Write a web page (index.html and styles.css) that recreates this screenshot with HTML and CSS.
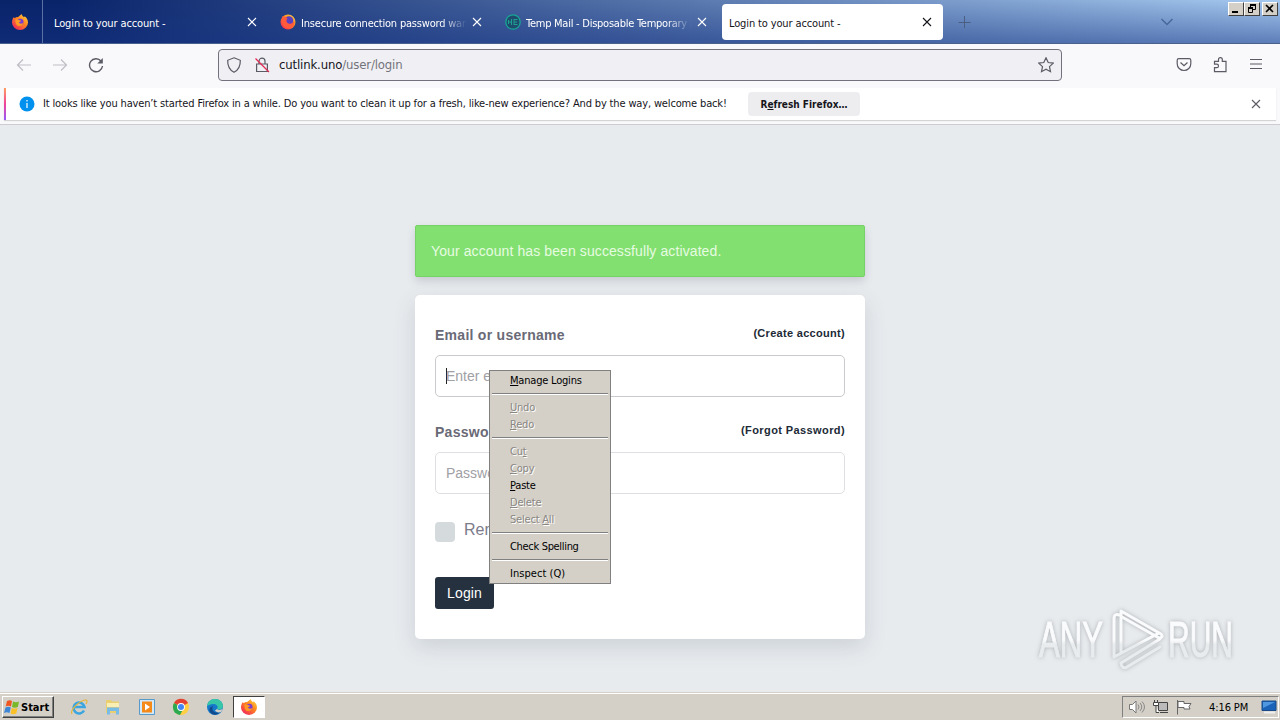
FILE: index.html
```html
<!DOCTYPE html>
<html lang="en">
<head>
  <meta charset="UTF-8" />
  <meta name="viewport" content="width=device-width, initial-scale=1.0" />
  <title>Login to your account -</title>
  <link rel="stylesheet" href="styles.css">
</head>
<body>
  <!-- shared icons -->
  <svg class="defs" width="0" height="0">
    <defs>
      <linearGradient id="fire" x1="1" y1="0" x2="0.2" y2="1">
        <stop offset="0" stop-color="#ffe14a" />
        <stop offset="0.45" stop-color="#ff8a1f" />
        <stop offset="1" stop-color="#f0245c" />
      </linearGradient>
      <linearGradient id="mark" x1="0" y1="0" x2="0" y2="74" gradientUnits="userSpaceOnUse">
        <stop offset="0.5" stop-color="#fafbfc" />
        <stop offset="0.56" stop-color="#e9ecee" />
      </linearGradient>
      <symbol id="firefox" viewBox="0 0 16 16">
        <path d="M1.600 3.200C2 3.600 2.400 3.800 3 4 4 3 5 3 5.800 3.200 7.200 2.400 8 1.200 9.600 0c.2 1.600 1.400 2.200 2.400 3.200.4-.2.6-.5.6-.9C14.800 4 16 6 16 8.600A8 7.400 0 0 1 0 8.600C0 6.400.7 4.600 1.600 3.200z" fill="url(#fire)" />
        <circle cx="8.300" cy="8" r="3.200" fill="#7a3bd0" />
        <path d="M3.500 5.500c1.500-.7 3-.3 3.600.8 1 .2 1.500.1 2 .4-.6 1.200-1.700 1.100-2.300 1.900.9 1.200 2.800 1.500 4.400.2-.5 2.300-2.300 3.500-4.200 3.300C4.500 12 3 9 3.500 5.500z" fill="#ff9a25" />
      </symbol>
      <symbol id="close" viewBox="0 0 16 16">
        <path d="M4 4l8 8M12 4l-8 8" stroke="currentColor" stroke-width="1.100" fill="none" />
      </symbol>
    </defs>
  </svg>

  <header class="tabbar">
    <div class="firefox-view"><svg width="16" height="16"><use href="#firefox" /></svg></div>
    <div class="tabs">
      <div class="tab">
        <span class="tab-title">Login to your account -</span>
        <svg class="tab-close" width="16" height="16"><use href="#close" /></svg>
      </div>
      <div class="tab has-icon">
        <svg class="tab-icon" viewBox="0 0 16 16">
          <circle cx="8" cy="8" r="7.500" fill="url(#fire)" />
          <circle cx="9" cy="6.500" r="4.300" fill="#5b3fc0" />
          <path d="M2.500 2C4 3 6 3 7.500 4.500 6 6 6 8.500 8.500 9.500c2.500.8 5-.5 6-2.500 0 5-3 7.500-6.500 7.500C3 14.500.5 8 2.500 2z" fill="#ff5a3c" />
        </svg>
        <span class="tab-title fade insecure">Insecure connection password warning</span>
        <svg class="tab-close" width="16" height="16"><use href="#close" /></svg>
      </div>
      <div class="tab has-icon">
        <svg class="tab-icon" viewBox="0 0 16 16">
          <circle cx="8" cy="8" r="7.200" fill="#1d4c6c" stroke="#17a796" stroke-width="1.300" />
          <path d="M3.500 6v4M3.500 8h3M6.500 5v6M9 5v6M9 5.500h3.500M9 8h3M9 10.500h3.500" stroke="#1fa093" fill="none" />
        </svg>
        <span class="tab-title fade temp">Temp Mail - Disposable Temporary Email</span>
        <svg class="tab-close" width="16" height="16"><use href="#close" /></svg>
      </div>
      <div class="tab active">
        <span class="tab-title">Login to your account -</span>
        <svg class="tab-close" width="16" height="16"><use href="#close" /></svg>
      </div>
    </div>
    <svg class="new-tab" width="16" height="16" viewBox="0 0 16 16"><path d="M8.500 2v12M2.500 8.500h12" /></svg>
    <svg class="all-tabs" width="16" height="16" viewBox="0 0 16 16"><path d="M2.500 5L8 10.500 13.500 5" /></svg>
    <div class="window-buttons">
      <div class="win-btn"><svg width="14" height="12"><path d="M3 9h6" stroke="#000" stroke-width="2" /></svg></div>
      <div class="win-btn restore"><svg width="14" height="12"><path d="M5 2h6M3 5h5" stroke="#000" stroke-width="2" /><path d="M5.500 2v2M10.500 2v4.500H8M3.500 5v4.500h4V5" stroke="#000" fill="none" /></svg></div>
      <div class="win-btn"><svg width="14" height="12"><path d="M3 2l7 7M10 2L3 9" stroke="#000" stroke-width="1.600" /></svg></div>
    </div>
  </header>

  <nav class="toolbar">
    <div class="nav-buttons">
      <svg class="disabled" width="16" height="16" viewBox="0 0 16 16"><path d="M15 8H1.500M7 2.500L1.500 8 7 13.500" /></svg>
      <svg class="disabled" width="16" height="16" viewBox="0 0 16 16"><path d="M1 8h13.500M9 2.500L14.500 8 9 13.500" /></svg>
      <svg width="16" height="16" viewBox="0 0 16 16"><path d="M13 4A6.500 6.500 0 1 0 14.500 9" stroke-width="1.400" /><path d="M14.800 1v5.500H9.300z" fill="#5b5b66" stroke="none" /></svg>
    </div>
    <div class="urlbar">
      <svg width="16" height="16" viewBox="0 0 16 16"><path d="M8 .8l6.300 2.500C14.500 8.500 13 12.800 8 15.300 3 12.800 1.500 8.500 1.700 3.300z" /></svg>
      <svg width="16" height="16" viewBox="0 0 16 16"><path d="M5 7V4.200a3 3 0 0 1 6 0V7M2.600 7h10.800v7.500H2.600z" /><path d="M1.500 1.500l13.500 13.500" stroke="#e22850" /></svg>
      <span class="url">cutlink.uno<span class="path">/user/login</span></span>
      <svg class="star" width="16" height="16" viewBox="0 0 16 16"><path d="M8 .8l2.200 4.700 5.100.6-3.800 3.500 1 5.100L8 12.200l-4.500 2.500 1-5.100L.7 6.100l5.100-.6z" /></svg>
    </div>
    <div class="toolbar-right">
      <svg width="16" height="16" viewBox="0 0 16 16"><path d="M2.800 1.700h10.400c1 0 1.600.6 1.600 1.600v3.400a6.800 6.800 0 0 1-13.600 0V3.300c0-1 .6-1.600 1.600-1.600zM4.500 5.500L8 8.800l3.500-3.300" /></svg>
      <svg width="16" height="16" viewBox="0 0 16 16"><path d="M2.500 14.700v-4h2.200a1.800 1.800 0 0 0 0-3.600H2.500V4.300h4V2.500a1.900 1.900 0 0 1 3.800 0v1.800h3.700v10.400z" /></svg>
      <svg width="16" height="16" viewBox="0 0 16 16"><path d="M2 2.500h12M2 7h12M2 11.500h12" /></svg>
    </div>
  </nav>

  <div class="notification">
    <div class="message">
      <svg width="16" height="16" viewBox="0 0 16 16"><circle cx="8" cy="8" r="7.500" fill="#0090ed" /><path d="M8 7v5M8 4v1.500" stroke="#fff" stroke-width="1.200" /></svg>
      <span class="message-text">It looks like you haven’t started Firefox in a while. Do you want to clean it up for a fresh, like-new experience? And by the way, welcome back!</span>
      <button class="refresh">R<u>e</u>fresh Firefox…</button>
      <svg class="dismiss" width="16" height="16"><use href="#close" /></svg>
    </div>
  </div>

  <main class="page">
    <div class="alert">Your account has been successfully activated.</div>
    <form class="card">
      <div class="label-row">
        <label for="username">Email or username</label>
        <a class="create">(Create account)</a>
      </div>
      <div class="field focused" id="username"><i class="caret"></i>Enter email or username</div>
      <div class="label-row second">
        <label for="password">Password</label>
        <a class="forgot">(Forgot Password)</a>
      </div>
      <div class="field" id="password">Password</div>
      <div class="remember"><span class="checkbox"></span>Remember me</div>
      <button class="login" type="button">Login</button>
    </form>

    <svg class="watermark" width="210" height="74" viewBox="0 0 210 74">
      <text x="9" y="54" textLength="64" lengthAdjust="spacingAndGlyphs">ANY</text>
      <text x="138" y="54" textLength="65" lengthAdjust="spacingAndGlyphs">RUN</text>
      <path d="M89 12c-3-1-5 0-5 3v38M91 50V8l40 23c2 2 1 4-2 4L92 14M84 54l45-24M91 60c0 4 3 6 6 4l33-20M91 60l39-24" />
    </svg>
  </main>

  <footer class="taskbar">
    <div class="start">
      <svg width="16" height="16" viewBox="0 0 16 16">
        <path d="M3 2c2-1 3.500-1 5 0L7 7.500c-2-1-3.500-1-5.300 0z" fill="#ee5722" />
        <path d="M9 2.500c2 1 4 1 6 0L13.800 8c-2 1-4 1-5.800 0z" fill="#79b829" />
        <path d="M1.500 8.500c2-1 3.500-1 5.300 0L5.500 14c-2-1-3.500-1-5.500 0z" fill="#3d87d6" />
        <path d="M7.800 9c2 1 4 1 5.800 0l-1.300 5.500c-2 1-4 1-5.800 0z" fill="#fcc027" />
      </svg>
      <span>Start</span>
    </div>
    <div class="launchers">
      <svg width="18" height="18" viewBox="0 0 18 18">
        <path d="M14 12.500A5.500 5.500 0 1 1 14.500 9H5" stroke="#3ba5df" stroke-width="2.600" fill="none" />
        <path d="M2 16C0 13 7 4 15 2c3-.5 2 2.500 1 4" stroke="#e4b53b" stroke-width="1.200" fill="none" />
      </svg>
      <svg width="18" height="18" viewBox="0 0 18 18">
        <path d="M2 2h5l1 1.500h7V15H2z" fill="#e9cf70" />
        <path d="M3 5h12v4H3z" fill="#f9eeb4" />
        <path d="M3 16.500V9.500h12v7h-3V13H6v3.500z" fill="#79bce5" />
      </svg>
      <svg width="18" height="18" viewBox="0 0 18 18">
        <path d="M1.500 1.500h15v15h-15z" fill="#d1e9f8" stroke="#5799c8" />
        <path d="M4 3.500h10v11H4z" fill="#f58a18" />
        <path d="M7 5.500l5 3.500-5 3.500z" fill="#fff" />
      </svg>
      <svg width="18" height="18" viewBox="0 0 18 18">
        <circle cx="9" cy="9" r="8" fill="#ffce43" />
        <path d="M9 9L2 5a8 8 0 0 1 14 0z" fill="#e34133" />
        <path d="M2 5a8 8 0 0 0 6 12l3.500-6.500L9 9z" fill="#2da94f" />
        <circle cx="9" cy="9" r="3.900" fill="#fff" />
        <circle cx="9" cy="9" r="3" fill="#4285f4" />
      </svg>
      <svg width="18" height="18" viewBox="0 0 18 18">
        <circle cx="9" cy="9" r="8" fill="#1679c9" />
        <path d="M1 8C2 3 5 1 9 1c5 0 8 3.500 8 7 0 3-3 4-6 3 2-3-1-5-4-5-2.500 0-4 1-6 2z" fill="#37c6a8" />
        <path d="M7 8c-2 4 1 8 7 6-3 4-8 3-10 0-1.500-3 0-5 3-6z" fill="#114a8b" />
        <path d="M11 11c2 1.500 4 1 6-.5L15 14c-3 1-5 0-6-1.500z" fill="#d4d0c8" />
      </svg>
      <div class="running"><svg width="16" height="16"><use href="#firefox" /></svg></div>
    </div>
    <div class="tray">
      <svg width="18" height="16" viewBox="0 0 18 16">
        <path d="M1.500 5.500h3L8 2v12L4.500 10.500h-3z" fill="#fff" stroke="#777" />
        <path d="M10 5.500q2 2.500 0 5M12 4q3.500 4 0 8M14 2.500q5 5.500 0 11" stroke="#888" fill="none" />
      </svg>
      <svg width="18" height="16" viewBox="0 0 18 16">
        <path d="M6.500 3.500h9v8h-9zM8 13.500h8" fill="#bbb" stroke="#444" />
        <path d="M1.500 3.500h5v3h-5zM2.500 1v2.500M5.500 1v2.500M4 6.500v7h3" fill="#fff" stroke="#444" />
      </svg>
      <svg width="18" height="16" viewBox="0 0 18 16">
        <path d="M1.500 1v14.500" stroke="#666" />
        <path d="M2 2.500h6v2h7l-2 3 1 2.500H8V8.500H2z" fill="#fff" stroke="#666" />
      </svg>
      <span class="clock">4:16 PM</span>
      <svg width="17" height="16" viewBox="0 0 17 16">
        <path d="M1 2h14v9.500H1z" fill="#1b63b9" stroke="#174a86" />
        <path d="M2 3h12L2 9z" fill="#4f98df" />
        <path d="M3 13.500h11" stroke="#eee" stroke-width="2" />
      </svg>
    </div>
  </footer>

  <div class="context-menu">
    <div class="item"><u>M</u>anage Logins</div>
    <hr>
    <div class="item off"><u>U</u>ndo</div>
    <div class="item off"><u>R</u>edo</div>
    <hr>
    <div class="item off">Cu<u>t</u></div>
    <div class="item off"><u>C</u>opy</div>
    <div class="item"><u>P</u>aste</div>
    <div class="item off"><u>D</u>elete</div>
    <div class="item off">Select <u>A</u>ll</div>
    <hr>
    <div class="item spelling">Check Spelling</div>
    <hr>
    <div class="item inspect">Inspect (Q)</div>
  </div>
</body>
</html>
```
FILE: styles.css
```css
* {
  box-sizing: border-box;
}

body {
  margin: 0;
  width: 1280px;
  height: 720px;
  overflow: hidden;
  display: flex;
  flex-direction: column;
  font-family: "DejaVu Sans Condensed", "DejaVu Sans", sans-serif;
  font-stretch: condensed;
  font-size: 11px;
  color: #15141a;
}

svg {
  flex: none;
  display: block;
}

.defs {
  position: absolute;
}

/* tab strip */
.tabbar {
  display: flex;
  height: 44px;
  border-bottom: 1px solid #49618c;
  background: linear-gradient(to bottom, transparent, rgba(20, 50, 130, 0.5)), linear-gradient(to right, #0a246a 5%, #a6caf0);
}

.firefox-view {
  width: 43px;
  padding: 14px 0 0 12px;
  border-right: 1px solid #5b70a3;
}

.tabs {
  display: flex;
  gap: 4px;
  padding: 4px 0 3px 4px;
}

.tab {
  display: flex;
  align-items: center;
  width: 221px;
  height: 36px;
  padding: 0 8px 0 7px;
  border-radius: 4px;
  color: #fff;
}

.tab.has-icon {
  padding-left: 8px;
}

.tab.active {
  background: #fff;
  color: #15141a;
}

.tab-icon {
  width: 16px;
  height: 16px;
  margin-right: 5px;
}

.tab-title {
  flex: 1;
  overflow: hidden;
  white-space: nowrap;
  line-height: 18px;
  padding-top: 3px;
  letter-spacing: -0.13px;
}

.tab-title.fade {
  -webkit-mask-image: linear-gradient(to left, transparent 2px, #000 28px);
  mask-image: linear-gradient(to left, transparent 2px, #000 28px);
}

.insecure {
  letter-spacing: -0.2px;
}

.temp {
  letter-spacing: -0.25px;
}

.new-tab,
.all-tabs {
  margin-top: 14px;
  fill: none;
  stroke: #4b5f83;
  stroke-width: 1;
}

.new-tab {
  margin-left: 13px;
}

.all-tabs {
  margin-left: auto;
  margin-right: 53px;
  stroke: #47679a;
  stroke-width: 1.4;
}

.window-buttons {
  display: flex;
  padding: 2px 2px 0 0;
}

.win-btn {
  width: 16px;
  height: 14px;
  background: #d4d0c8;
  border: 1px solid;
  border-color: #fff #404040 #404040 #fff;
}

.restore {
  margin-right: 2px;
}

/* toolbar */
.toolbar {
  display: flex;
  align-items: center;
  height: 44px;
  padding-bottom: 3px;
  background: #f9f9fb;
}

.toolbar svg {
  fill: none;
  stroke: #5b5b66;
  stroke-width: 1.2;
}

.toolbar svg.disabled {
  stroke: #bfbfc6;
}

.nav-buttons {
  display: flex;
  gap: 20px;
  width: 218px;
  padding-left: 16px;
}

.urlbar {
  display: flex;
  align-items: center;
  width: 844px;
  height: 32px;
  padding: 0 7px;
  border: 1px solid #72727e;
  border-radius: 4px;
  background: #f0f0f4;
}

.urlbar svg + svg {
  margin-left: 12px;
}

.url {
  margin-left: 9px;
  font-size: 13px;
  letter-spacing: -0.15px;
}

.path {
  color: #73737b;
}

.urlbar .star {
  margin-left: auto;
}

.toolbar-right {
  display: flex;
  gap: 20px;
  margin-left: auto;
  padding-right: 16px;
}

/* welcome back bar */
.notification {
  height: 37px;
  padding: 0 4px 4px;
  background: #f9f9fb;
  border-bottom: 1px solid #ccccd1;
}

.message {
  display: flex;
  align-items: center;
  height: 32px;
  padding: 0 12px 0 13px;
  background: #fff;
  border-left: 2px solid;
  border-image: linear-gradient(#ffa45c, #f0439a 50%, #9059ff) 1;
  box-shadow: 0 1px 1px rgba(0, 0, 0, 0.15);
}

.message-text {
  margin-left: 8px;
  width: 705px;
  padding-bottom: 1px;
  white-space: nowrap;
  letter-spacing: -0.15px;
}

.refresh {
  width: 112px;
  height: 24px;
  padding: 0;
  border: none;
  border-radius: 4px;
  background: #ededf0;
  color: #15141a;
  font: bold 10px "DejaVu Sans Condensed", "DejaVu Sans", sans-serif;
}

.dismiss {
  margin-left: auto;
  color: #5b5b66;
}

/* login page */
.page {
  position: relative;
  flex: 1;
  padding-top: 100px;
  background: #e8ebee;
  font-family: "Liberation Sans", Arial, sans-serif;
}

.alert,
.card {
  width: 450px;
  margin: 0 auto;
}

.alert {
  height: 52px;
  margin-bottom: 18px;
  padding: 0 15px;
  line-height: 50px;
  font-size: 14px;
  letter-spacing: 0.1px;
  color: #e6fbe1;
  background: #82e070;
  border: 1px solid #76d267;
  border-radius: 2px;
  box-shadow: 0 4px 8px rgba(70, 70, 90, 0.2);
}

.card {
  height: 344px;
  padding: 31px 20px 0;
  background: #fff;
  border-radius: 5px;
  box-shadow: 0 8px 22px rgba(50, 65, 85, 0.15);
}

.label-row {
  display: flex;
  justify-content: space-between;
  height: 29px;
  line-height: 18px;
  font-weight: bold;
}

.label-row.second {
  margin-top: 26px;
}

.label-row label {
  font-size: 14px;
  letter-spacing: 0.27px;
  color: #6a6a76;
}

.label-row a {
  line-height: 14px;
  letter-spacing: 0.3px;
  color: #202a36;
}

.label-row .forgot {
  letter-spacing: 0.4px;
}

.field {
  display: flex;
  align-items: center;
  height: 42px;
  padding: 0 10px;
  border: 1px solid #dedfe2;
  border-radius: 5px;
  font-size: 14px;
  color: #a0a0a5;
  white-space: nowrap;
}

.field.focused {
  border-color: #c9cacd;
}

.caret {
  height: 16px;
  margin-right: -1px;
  border-left: 1px solid #222;
}

.remember {
  display: flex;
  align-items: center;
  height: 20px;
  margin-top: 26px;
  font-size: 16px;
  color: #7c7c8a;
}

.checkbox {
  width: 20px;
  height: 20px;
  margin: 4px 9px 0 0;
  border-radius: 4px;
  background: #d5dadd;
}

.login {
  width: 59px;
  height: 32px;
  margin-top: 37px;
  padding: 0;
  border: none;
  border-radius: 3px;
  background: #25313e;
  color: #fff;
  font: 14px "Liberation Sans", Arial, sans-serif;
  letter-spacing: 0.1px;
}

.watermark {
  position: absolute;
  right: 40px;
  bottom: 15px;
  filter: drop-shadow(0 0 2px rgba(110, 115, 120, 0.5));
}

.watermark text {
  font: 50px "Liberation Sans", Arial, sans-serif;
  fill: url(#mark);
  stroke: url(#mark);
  stroke-width: 1;
}

.watermark path {
  fill: none;
  stroke: url(#mark);
  stroke-width: 3;
  stroke-linejoin: round;
  stroke-linecap: round;
}

/* taskbar */
.taskbar {
  display: flex;
  height: 28px;
  padding-top: 3px;
  background: #d4d0c8;
  border-top: 1px solid #d4d0c8;
  box-shadow: inset 0 1px #fff;
}

.start {
  display: flex;
  align-items: center;
  gap: 1px;
  width: 52px;
  height: 22px;
  margin-left: 2px;
  padding-left: 1px;
  border: 1px solid;
  border-color: #fff #404040 #404040 #fff;
  box-shadow: inset -1px -1px #808080;
  font-weight: bold;
  color: #000;
}

.launchers {
  display: flex;
  align-items: center;
  gap: 16px;
  height: 22px;
  margin-left: 16px;
}

.running {
  display: flex;
  align-items: center;
  justify-content: center;
  width: 32px;
  height: 22px;
  margin-left: -7px;
  background: #fff;
  border: 1px solid;
  border-color: #404040 #fff #fff #404040;
}

.tray {
  display: flex;
  align-items: center;
  width: 157px;
  height: 22px;
  margin-left: auto;
  margin-right: 1px;
  padding-left: 5px;
  gap: 6px;
  border: 1px solid;
  border-color: #808080 #fff #fff #808080;
}

.clock {
  width: 44px;
  margin: 0 3px 0 9px;
  white-space: nowrap;
  letter-spacing: -0.1px;
  color: #000;
}

/* right click menu */
.context-menu {
  position: absolute;
  left: 489px;
  top: 370px;
  width: 122px;
  height: 214px;
  padding: 1px;
  border: 1px solid #808080;
  background: #d4d0c8;
  color: #000;
}

.item {
  height: 17px;
  padding-left: 19px;
  line-height: 17px;
  white-space: nowrap;
  letter-spacing: -0.2px;
}

.item.spelling {
  letter-spacing: -0.32px;
}

.item.inspect {
  letter-spacing: 0.05px;
}

.item.off {
  color: #8a8782;
  text-shadow: 1px 1px #fff;
}

.context-menu hr {
  height: 2px;
  margin: 4px 1px;
  border: none;
  border-top: 1px solid #808080;
  border-bottom: 1px solid #fff;
}
```
